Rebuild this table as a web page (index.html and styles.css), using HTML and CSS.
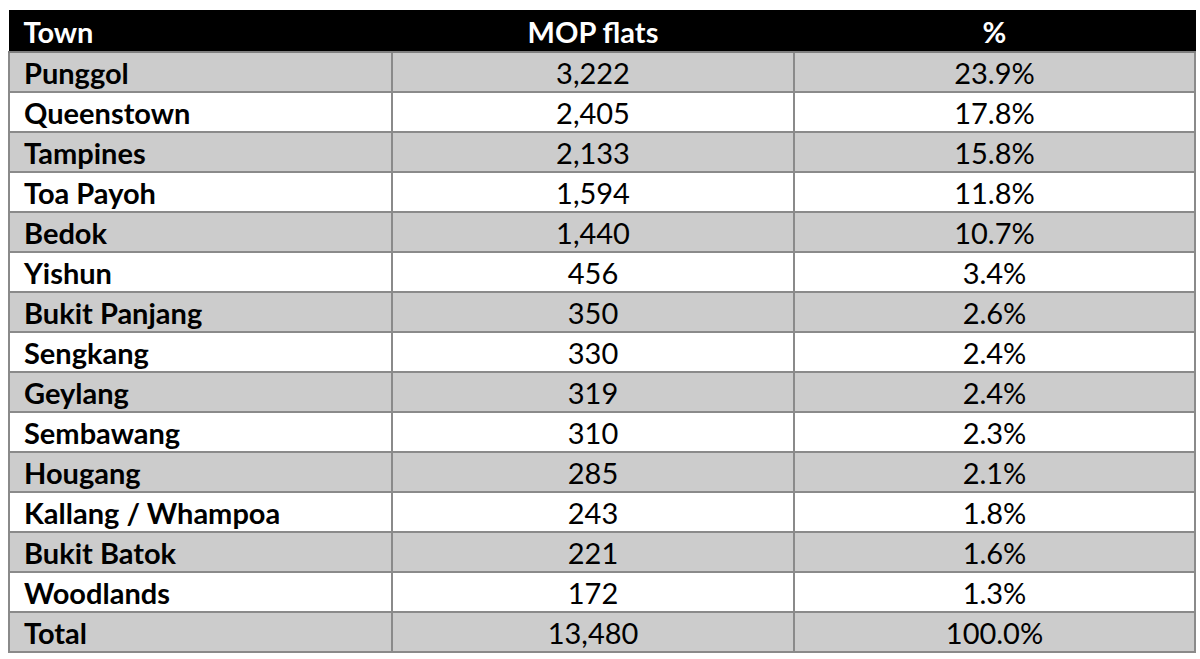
FILE: index.html
```html
<!DOCTYPE html>
<html>
<head>
<meta charset="utf-8">
<link rel="stylesheet" href="styles.css">
</head>
<body>
<table class="mop">
  <colgroup>
    <col class="c1"><col class="c2"><col class="c3">
  </colgroup>
  <thead>
    <tr><th class="town">Town</th><th>MOP flats</th><th>%</th></tr>
  </thead>
  <tbody>
    <tr class="alt"><td class="town">Punggol</td><td>3,222</td><td>23.9%</td></tr>
    <tr><td class="town">Queenstown</td><td>2,405</td><td>17.8%</td></tr>
    <tr class="alt"><td class="town">Tampines</td><td>2,133</td><td>15.8%</td></tr>
    <tr><td class="town">Toa Payoh</td><td>1,594</td><td>11.8%</td></tr>
    <tr class="alt"><td class="town">Bedok</td><td>1,440</td><td>10.7%</td></tr>
    <tr><td class="town">Yishun</td><td>456</td><td>3.4%</td></tr>
    <tr class="alt"><td class="town">Bukit Panjang</td><td>350</td><td>2.6%</td></tr>
    <tr><td class="town">Sengkang</td><td>330</td><td>2.4%</td></tr>
    <tr class="alt"><td class="town">Geylang</td><td>319</td><td>2.4%</td></tr>
    <tr><td class="town">Sembawang</td><td>310</td><td>2.3%</td></tr>
    <tr class="alt"><td class="town">Hougang</td><td>285</td><td>2.1%</td></tr>
    <tr><td class="town">Kallang / Whampoa</td><td>243</td><td>1.8%</td></tr>
    <tr class="alt"><td class="town">Bukit Batok</td><td>221</td><td>1.6%</td></tr>
    <tr><td class="town">Woodlands</td><td>172</td><td>1.3%</td></tr>
    <tr class="alt"><td class="town">Total</td><td>13,480</td><td>100.0%</td></tr>
  </tbody>
</table>
</body>
</html>
```
FILE: styles.css
```css
html, body {
  margin: 0;
  background: #ffffff;
}
body {
  padding: 10px 6px 0 8px;
  font-family: Lato, "Liberation Sans", sans-serif;
}
.mop {
  border-collapse: collapse;
  width: 1186px;
  table-layout: fixed;
  font-size: 29px;
  color: #000;
}
.c1 { width: 383px; }
.c2 { width: 402px; }
.c3 { width: 401px; }
.mop th {
  background: #000;
  color: #fff;
  font-weight: 700;
  height: 40px;
  padding: 0;
  text-align: center;
  border: 1px solid #000;
  border-bottom: 2px solid #7f7f7f;
  line-height: 1;
}
.mop th.town { text-align: left; padding-left: 14px; }
.mop td {
  height: 38px;
  padding: 0;
  text-align: center;
  border: 2px solid #8a8a8a;
  line-height: 1;
}
.mop td.town {
  text-align: left;
  padding-left: 14px;
  font-weight: 700;
}
.mop tr.alt td { background: #cccccc; }
```
